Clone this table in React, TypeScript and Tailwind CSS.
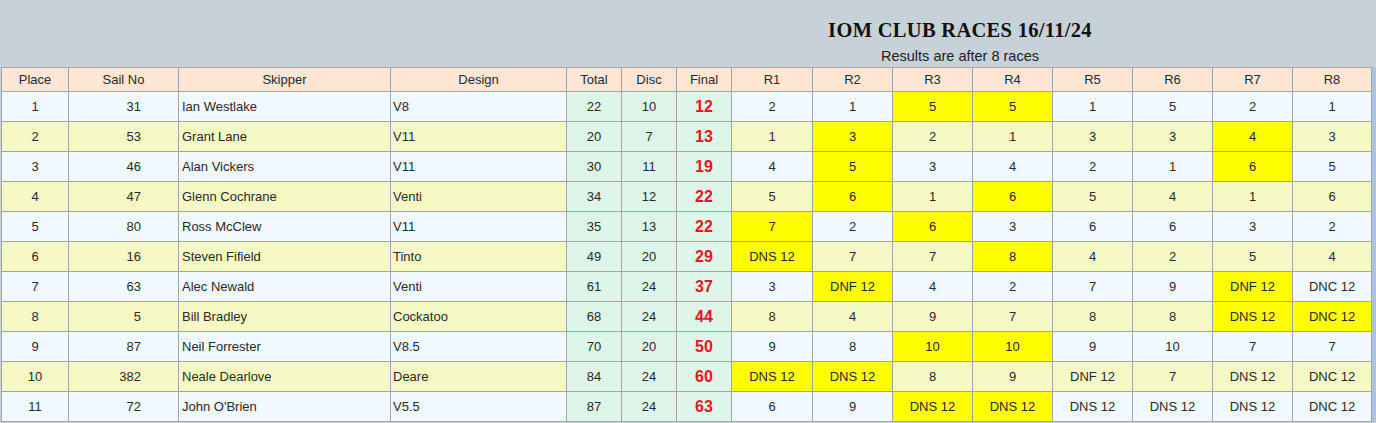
const rows: [string, string, string, string, string, string, string, string[]][] = [
  ["1", "31", "Ian Westlake", "V8", "22", "10", "12", ["2", "1", "*5", "*5", "1", "5", "2", "1"]],
  ["2", "53", "Grant Lane", "V11", "20", "7", "13", ["1", "*3", "2", "1", "3", "3", "*4", "3"]],
  ["3", "46", "Alan Vickers", "V11", "30", "11", "19", ["4", "*5", "3", "4", "2", "1", "*6", "5"]],
  ["4", "47", "Glenn Cochrane", "Venti", "34", "12", "22", ["5", "*6", "1", "*6", "5", "4", "1", "6"]],
  ["5", "80", "Ross McClew", "V11", "35", "13", "22", ["*7", "2", "*6", "3", "6", "6", "3", "2"]],
  ["6", "16", "Steven Fifield", "Tinto", "49", "20", "29", ["*DNS 12", "7", "7", "*8", "4", "2", "5", "4"]],
  ["7", "63", "Alec Newald", "Venti", "61", "24", "37", ["3", "*DNF 12", "4", "2", "7", "9", "*DNF 12", "DNC 12"]],
  ["8", "5", "Bill Bradley", "Cockatoo", "68", "24", "44", ["8", "4", "9", "7", "8", "8", "*DNS 12", "*DNC 12"]],
  ["9", "87", "Neil Forrester", "V8.5", "70", "20", "50", ["9", "8", "*10", "*10", "9", "10", "7", "7"]],
  ["10", "382", "Neale Dearlove", "Deare", "84", "24", "60", ["*DNS 12", "*DNS 12", "8", "9", "DNF 12", "7", "DNS 12", "DNC 12"]],
  ["11", "72", "John O'Brien", "V5.5", "87", "24", "63", ["6", "9", "*DNS 12", "*DNS 12", "DNS 12", "DNS 12", "DNS 12", "DNC 12"]],
];

const heads = ["Place", "Sail No", "Skipper", "Design", "Total", "Disc", "Final", "R1", "R2", "R3", "R4", "R5", "R6", "R7", "R8"];

export default function App() {
  return (
    <div className="w-[1376px] h-[423px] bg-[#c6d2d8] text-[#2a2a2a] overflow-hidden" style={{ fontFamily: '"Liberation Sans", Arial, sans-serif' }}>
      {/* title block */}
      <div className="h-[67px] flex justify-end">
        <div className="w-[832px] flex flex-col items-center pt-[18px]">
          <div className="text-[20.5px] leading-[25px] font-bold text-[#111] tracking-[0.3px]" style={{ fontFamily: '"Liberation Serif", "Times New Roman", serif' }}>
            IOM CLUB RACES 16/11/24
          </div>
          <div className="text-[14.5px] leading-[17px] mt-[5px] text-[#222]">Results are after 8 races</div>
        </div>
      </div>

      {/* results table */}
      <div className="flex">
        <div className="ml-px grid grid-cols-[66px_109px_211px_175px_54px_54px_54px_80px_79px_79px_79px_79px_79px_79px_78px] gap-px p-px bg-[#a4a4a4] text-[13px]">
          {heads.map((h) => (
            <div key={h} className="h-[23px] bg-[#fde6d3] flex items-center justify-center">{h}</div>
          ))}
          {rows.map((r, i) => {
            const bg = i % 2 === 0 ? "bg-[#eff9fe]" : "bg-[#f7f9c4]";
            return [
              <div key={i + "p"} className={`h-[29px] ${bg} flex items-center justify-center`}>{r[0]}</div>,
              <div key={i + "s"} className={`h-[29px] ${bg} flex items-center justify-end pr-[37px]`}>{r[1]}</div>,
              <div key={i + "k"} className={`h-[29px] ${bg} flex items-center pl-[3px]`}>{r[2]}</div>,
              <div key={i + "d"} className={`h-[29px] ${bg} flex items-center pl-[2px]`}>{r[3]}</div>,
              <div key={i + "t"} className="h-[29px] bg-[#def5e9] flex items-center justify-center">{r[4]}</div>,
              <div key={i + "c"} className="h-[29px] bg-[#def5e9] flex items-center justify-center">{r[5]}</div>,
              <div key={i + "f"} className="h-[29px] bg-[#def5e9] flex items-center justify-center text-[16px] font-bold text-[#e8141c]">{r[6]}</div>,
              ...r[7].map((v, j) => {
                const hi = v.startsWith("*");
                return (
                  <div key={i + "r" + j} className={`h-[29px] ${hi ? "bg-[#ffff00]" : bg} flex items-center justify-center`}>
                    {hi ? v.slice(1) : v}
                  </div>
                );
              }),
            ];
          })}
        </div>
        <div className="w-[4px] h-[355px] bg-[#a9c3e3]" />
      </div>
    </div>
  );
}
